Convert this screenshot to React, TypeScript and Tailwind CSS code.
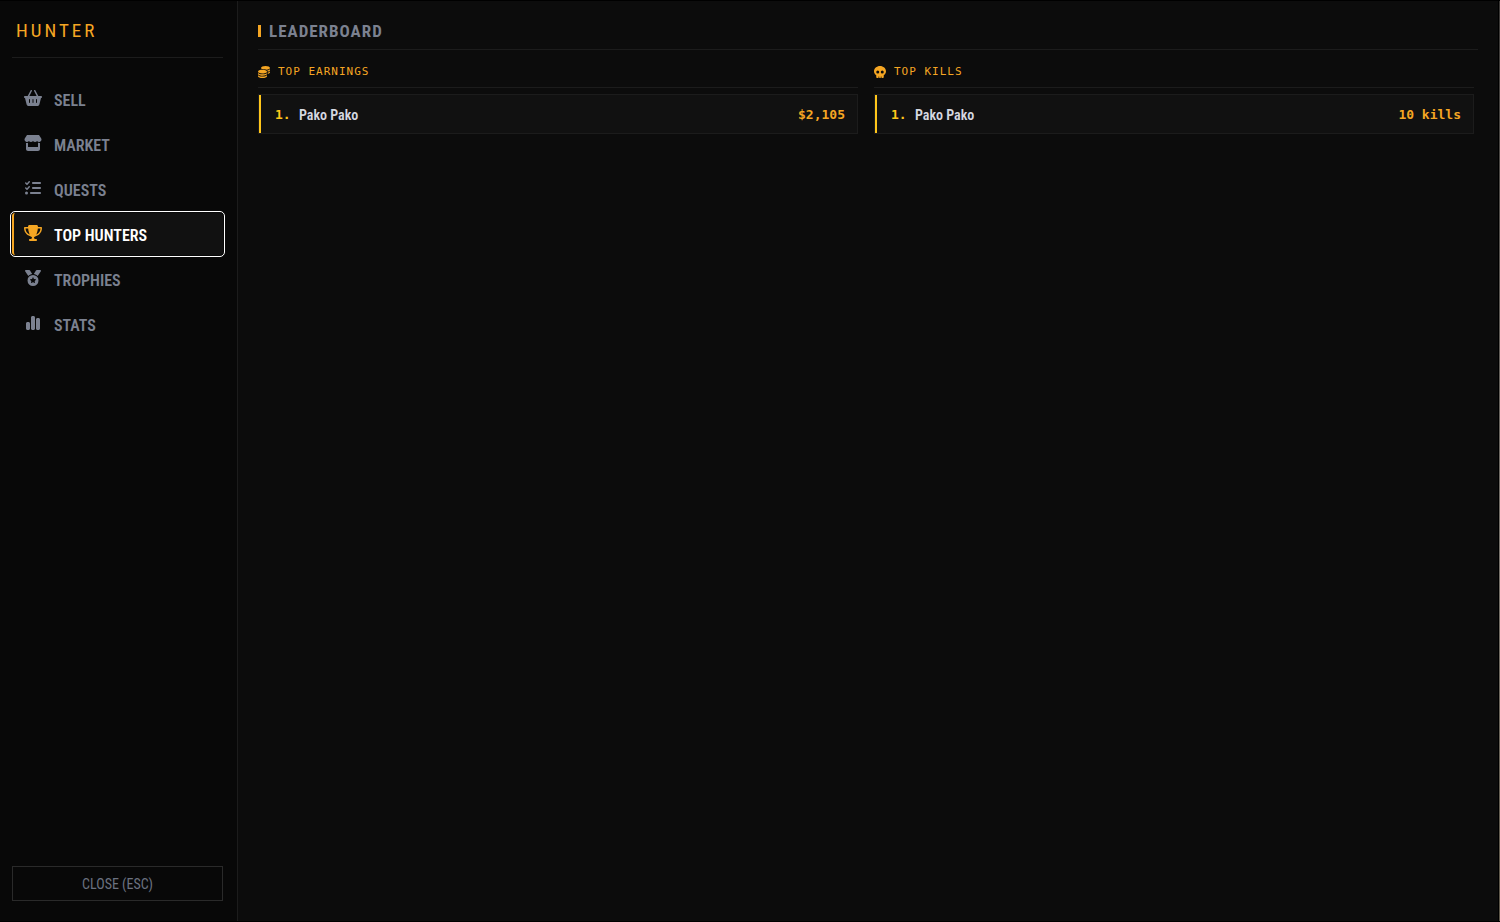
import type { IconType } from "react-icons";
import {
  FaBasketShopping,
  FaChartSimple,
  FaCoins,
  FaListCheck,
  FaMedal,
  FaSkull,
  FaStore,
  FaTrophy,
} from "react-icons/fa6";
import clsx from "clsx";

const navItems: { label: string; icon: IconType }[] = [
  { label: "SELL", icon: FaBasketShopping },
  { label: "MARKET", icon: FaStore },
  { label: "QUESTS", icon: FaListCheck },
  { label: "TOP HUNTERS", icon: FaTrophy },
  { label: "TROPHIES", icon: FaMedal },
  { label: "STATS", icon: FaChartSimple },
];

const boards: { title: string; icon: IconType; rows: { name: string; value: string }[] }[] = [
  { title: "TOP EARNINGS", icon: FaCoins, rows: [{ name: "Pako Pako", value: "$2,105" }] },
  { title: "TOP KILLS", icon: FaSkull, rows: [{ name: "Pako Pako", value: "10 kills" }] },
];

function Sidebar({ active }: { active: string }) {
  return (
    <aside className="flex w-[238px] shrink-0 flex-col border-r border-[#1c1c1c] bg-[#080808] pt-3 pr-[14px] pb-5 pl-3">
      <div className="border-b border-[#1c1c1c] px-1 pt-1 pb-3 text-[19px] leading-7 tracking-[3px] text-[#f5a623]">
        HUNTER
      </div>

      <nav className="mt-5 flex flex-col gap-[3px]">
        {navItems.map(({ label, icon: Icon }) => (
          <button
            key={label}
            type="button"
            className={clsx(
              "flex h-[42px] items-center gap-3 border-l-2 pl-[10px] text-[16px] font-semibold",
              label === active
                ? "rounded-[3px] border-[#f5a623] bg-[#111111] text-white outline outline-offset-1 outline-white"
                : "border-transparent text-[#7b8190]"
            )}
          >
            <Icon className={clsx("mb-[2px] h-4 w-[18px]", label === active && "text-[#f5a623]")} />
            <span className="pt-[3px]">{label}</span>
          </button>
        ))}
      </nav>

      <button
        type="button"
        className="mt-auto h-[35px] border border-[#2a2a2a] pt-[2px] text-[14px] text-[#6b7280]"
      >
        CLOSE (ESC)
      </button>
    </aside>
  );
}

function Board({ title, icon: Icon, rows }: (typeof boards)[number]) {
  return (
    <section>
      <h3 className="flex h-[30px] items-center gap-2 border-b border-[#1c1c1c] font-['DejaVu_Sans_Mono',monospace] text-[11px] tracking-[1px] text-[#f5a623]">
        <Icon className="mb-[2px] h-3 w-3" />
        {title}
      </h3>
      <ol className="mt-[6px] flex flex-col gap-1">
        {rows.map((row, i) => (
          <li key={row.name} className="border border-[#1c1c1c] bg-[#111111]">
            <div className="flex h-[38px] items-center border-l-2 border-[#ffc61a] pt-[2px] pr-3 pl-[14px] text-[13px]">
              <span className="w-6 font-['DejaVu_Sans_Mono',monospace] font-bold text-[#ffc61a]">{i + 1}.</span>
              <span className="text-[14px] font-semibold text-[#d5d8e0]">{row.name}</span>
              <span className="ml-auto font-['DejaVu_Sans_Mono',monospace] font-bold text-[#f5a623]">
                {row.value}
              </span>
            </div>
          </li>
        ))}
      </ol>
    </section>
  );
}

export default function App() {
  return (
    <div className="flex min-h-screen border-y border-black bg-[#0c0c0c] font-['Roboto_Condensed','Liberation_Sans_Narrow',sans-serif]">
      <Sidebar active="TOP HUNTERS" />
      <main className="flex-1 border-r border-black px-5 pt-3">
        <header className="flex h-[37px] items-center gap-2 border-b border-[#1c1c1c]">
          <span className="h-3 w-[3px] bg-[#f5a623]" />
          <h2 className="pt-[2px] text-[17px] font-bold tracking-[1px] text-[#7b8190]">LEADERBOARD</h2>
        </header>
        <div className="mt-2 grid grid-cols-2 gap-4 pr-1">
          {boards.map((board) => (
            <Board key={board.title} {...board} />
          ))}
        </div>
      </main>
      <div className="w-px bg-linear-to-b from-[#3a3836] from-0% via-[#77736c] via-60% to-[#5c5648]" />
    </div>
  );
}
